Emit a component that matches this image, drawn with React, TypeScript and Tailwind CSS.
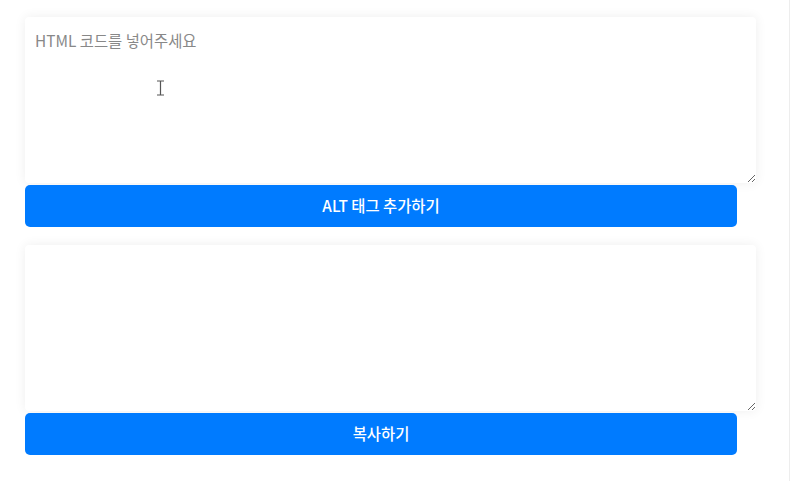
import React from 'react';

const font = { fontFamily: '"Noto Sans CJK KR", "Noto Sans", sans-serif' };

function Block({ placeholder, label }: { placeholder?: string; label: string }) {
  return (
    <div className="flex flex-col">
      <textarea
        placeholder={placeholder}
        className="w-[731px] h-[166px] rounded bg-white px-[10px] py-[10px] text-[15.4px] leading-[26px] text-gray-700 placeholder:text-[#888] shadow-[0_0_12px_rgba(0,0,0,0.07)] outline-none"
        style={font}
      />
      <button
        className="mt-[2px] w-[712px] h-[42px] rounded-[5px] bg-[#007bff] text-white text-[15.4px] font-medium"
        style={font}
      >
        {label}
      </button>
    </div>
  );
}

export default function App() {
  return (
    <div className="relative w-[800px] h-[481px] bg-white overflow-hidden flex">
      <div className="w-[790px] border-r border-[#ededed] pl-[25px] pt-[17px] flex flex-col gap-[18px]">
        <Block placeholder="HTML 코드를 넣어주세요" label="ALT 태그 추가하기" />
        <Block label="복사하기" />
      </div>
      {/* mouse text cursor */}
      <svg className="absolute left-[156px] top-[80px]" width="9" height="16" viewBox="0 0 9 16">
        <path d="M1 1h7M4.5 1v14M1 15h7" stroke="#555" strokeWidth="1.2" fill="none" />
      </svg>
    </div>
  );
}
